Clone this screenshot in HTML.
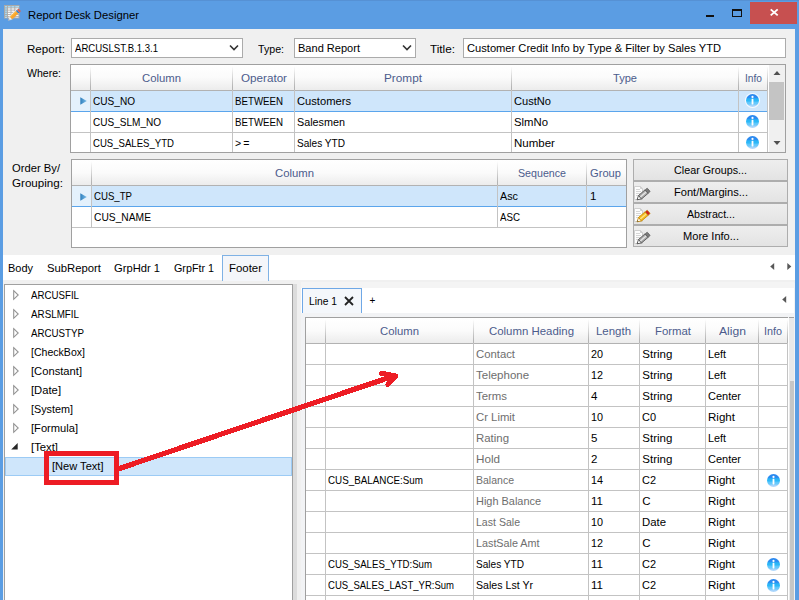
<!DOCTYPE html>
<html><head><meta charset="utf-8"><title>Report Desk Designer</title>
<style>
html,body{margin:0;padding:0;}
body{width:799px;height:600px;overflow:hidden;position:relative;background:#f0f0f0;font-family:"Liberation Sans",sans-serif;font-size:12px;}
.b{position:absolute;box-sizing:border-box;}
.t{position:absolute;white-space:pre;transform-origin:0 50%;line-height:16px;height:16px;font-size:11.5px;color:#000;}
svg{position:absolute;overflow:visible;}
</style></head><body>
<div class="b " style="left:0px;top:0px;width:799px;height:600px;background:#5b9de3;"></div>
<div class="b " style="left:3px;top:29px;width:792px;height:571px;background:#f0f0f0;"></div>
<div class="b " style="left:750px;top:2px;width:47px;height:22px;background:#c75050;"></div>
<svg style="left:750px;top:2px" width="47" height="22"><path d="M20.7 7.4 L27.7 13.4 M27.7 7.4 L20.7 13.4" stroke="#fff" stroke-width="1.9" fill="none"/></svg>
<div class="b " style="left:706px;top:15px;width:8px;height:2px;background:#111;"></div>
<div class="b " style="left:732px;top:9px;width:10px;height:8px;border:1px solid #111;border-top:2px solid #111;"></div>
<svg style="left:0px;top:0px" width="24" height="24" viewBox="0 0 24 24">
<rect x="4.5" y="5.5" width="14.5" height="12.5" fill="#fff" stroke="#a9a9a9"/>
<rect x="5" y="6" width="13.5" height="1.6" fill="#a6d8f2"/>
<rect x="5" y="6" width="2.2" height="11.5" fill="#a6d8f2"/>
<path d="M4.5 7.9H19M4.5 10.1H19M4.5 12.3H19M4.5 14.5H19M4.5 16.4H19M7.5 5.5V18M11 5.5V18M14.8 5.5V18" stroke="#a9a9a9" stroke-width="0.9" fill="none"/>
<g transform="translate(8.3,20.4) rotate(-43)">
<path d="M0 0 L3.6 -1.9 L3.6 1.9 Z" fill="#f4f4f4" stroke="#d0d0d0" stroke-width="0.4"/>
<path d="M0 0 L1.3 -0.7 L1.3 0.7 Z" fill="#8a8a8a"/>
<rect x="3.6" y="-1.9" width="8.4" height="3.8" fill="#f9a62b"/>
<rect x="3.6" y="-1.9" width="8.4" height="1.1" fill="#fbbd55"/>
<rect x="12" y="-1.9" width="1.6" height="3.8" fill="#2f7fc4"/>
<rect x="13.6" y="-1.9" width="2" height="3.8" rx="0.8" fill="#e2604e"/>
<path d="M3.6 -2.2 L15 -2.2" stroke="#fff" stroke-width="0.7" opacity="0.8"/>
</g>
</svg>
<span class="t " style="left:28.00px;top:7.20px;transform:scaleX(0.9812);">Report Desk Designer</span>
<span class="t " style="left:27.00px;top:40.90px;transform:scaleX(1.0076);">Report:</span>
<div class="b " style="left:71px;top:38px;width:172px;height:20px;background:#fff;border:1px solid #ababab;"></div>
<span class="t " style="left:75.00px;top:40.20px;transform:scaleX(0.8324);">ARCUSLST.B.1.3.1</span>
<svg style="left:229px;top:44px" width="10" height="8"><path d="M1 1.5 L5 5.5 L9 1.5" stroke="#333" stroke-width="1.6" fill="none"/></svg>
<span class="t " style="left:258.00px;top:40.90px;transform:scaleX(0.9244);">Type:</span>
<div class="b " style="left:294px;top:38px;width:122px;height:20px;background:#fff;border:1px solid #ababab;"></div>
<span class="t " style="left:298.00px;top:40.20px;transform:scaleX(0.9602);">Band Report</span>
<svg style="left:402px;top:44px" width="10" height="8"><path d="M1 1.5 L5 5.5 L9 1.5" stroke="#333" stroke-width="1.6" fill="none"/></svg>
<span class="t " style="left:430.00px;top:40.90px;transform:scaleX(1.0207);">Title:</span>
<div class="b " style="left:463px;top:38px;width:323px;height:20px;background:#fff;border:1px solid #ababab;"></div>
<span class="t " style="left:467.00px;top:40.20px;transform:scaleX(0.9685);">Customer Credit Info by Type &amp; Filter by Sales YTD</span>
<span class="t " style="left:27.00px;top:65.20px;transform:scaleX(0.9173);">Where:</span>
<div class="b " style="left:70px;top:64px;width:716px;height:89px;background:#fff;border:1px solid #a0a0a0;"></div>
<div class="b " style="left:71px;top:65px;width:697px;height:26px;background:linear-gradient(#ffffff 0%,#fbfbfb 50%,#ececec 100%);border-bottom:1px solid #b2b2b2;"></div>
<div class="b " style="left:71px;top:90px;width:697px;height:22px;background:#cfe6fb;border-top:1px solid #b2b2b2;border-bottom:1px solid #5ba5ec;"></div>
<div class="b " style="left:71px;top:91px;width:19px;height:20px;background:#e4f1fc;"></div>
<div class="b " style="left:71px;top:132px;width:697px;height:1px;background:#c3c3c3;"></div>
<div class="b " style="left:90px;top:65px;width:1px;height:26px;background:linear-gradient(rgba(190,190,190,0) 5%,#b4b4b4 85%);"></div>
<div class="b " style="left:90px;top:90px;width:1px;height:62px;background:#c3c3c3;"></div>
<div class="b " style="left:232px;top:65px;width:1px;height:26px;background:linear-gradient(rgba(190,190,190,0) 5%,#b4b4b4 85%);"></div>
<div class="b " style="left:232px;top:90px;width:1px;height:62px;background:#c3c3c3;"></div>
<div class="b " style="left:294px;top:65px;width:1px;height:26px;background:linear-gradient(rgba(190,190,190,0) 5%,#b4b4b4 85%);"></div>
<div class="b " style="left:294px;top:90px;width:1px;height:62px;background:#c3c3c3;"></div>
<div class="b " style="left:511px;top:65px;width:1px;height:26px;background:linear-gradient(rgba(190,190,190,0) 5%,#b4b4b4 85%);"></div>
<div class="b " style="left:511px;top:90px;width:1px;height:62px;background:#c3c3c3;"></div>
<div class="b " style="left:738px;top:65px;width:1px;height:26px;background:linear-gradient(rgba(190,190,190,0) 5%,#b4b4b4 85%);"></div>
<div class="b " style="left:738px;top:90px;width:1px;height:62px;background:#c3c3c3;"></div>
<div class="b " style="left:767px;top:65px;width:1px;height:26px;background:linear-gradient(rgba(190,190,190,0) 5%,#b4b4b4 85%);"></div>
<div class="b " style="left:767px;top:90px;width:1px;height:62px;background:#c3c3c3;"></div>
<span class="t " style="left:142.00px;top:69.90px;color:#4c5c8c;transform:scaleX(0.9842);">Column</span>
<span class="t " style="left:240.50px;top:69.90px;color:#4c5c8c;transform:scaleX(1.0136);">Operator</span>
<span class="t " style="left:384.00px;top:69.90px;color:#4c5c8c;transform:scaleX(1.0251);">Prompt</span>
<span class="t " style="left:613.00px;top:69.90px;color:#4c5c8c;transform:scaleX(0.9627);">Type</span>
<span class="t " style="left:744.50px;top:69.90px;color:#4c5c8c;transform:scaleX(0.8863);">Info</span>
<span class="t " style="left:93.00px;top:93.20px;transform:scaleX(0.8764);">CUS_NO</span>
<span class="t " style="left:235.00px;top:93.20px;transform:scaleX(0.8441);">BETWEEN</span>
<span class="t " style="left:297.00px;top:93.20px;transform:scaleX(0.9713);">Customers</span>
<span class="t " style="left:514.00px;top:93.20px;transform:scaleX(0.9649);">CustNo</span>
<svg style="left:744.3px;top:92.3px" width="17" height="17" viewBox="0 0 17 17">
<defs><linearGradient id="ig" x1="0" y1="0" x2="0" y2="1"><stop offset="0" stop-color="#2a86ee"/><stop offset="0.30" stop-color="#2b8ef2"/><stop offset="0.36" stop-color="#27b2f6"/><stop offset="0.55" stop-color="#2ebbf8"/><stop offset="0.62" stop-color="#5cc6fb"/><stop offset="0.78" stop-color="#6ccafc"/><stop offset="0.86" stop-color="#a2d2fb"/><stop offset="1" stop-color="#b4dafc"/></linearGradient></defs>
<circle cx="8.5" cy="8.5" r="7.6" fill="#fff" opacity="0.8"/>
<circle cx="8.5" cy="8.5" r="6.5" fill="url(#ig)"/>
<circle cx="8.5" cy="4.9" r="1.1" fill="#fff"/><rect x="7.6" y="6.7" width="1.8" height="5.7" rx="0.3" fill="#fff"/></svg>
<span class="t " style="left:93.00px;top:114.20px;transform:scaleX(0.8722);">CUS_SLM_NO</span>
<span class="t " style="left:235.00px;top:114.20px;transform:scaleX(0.8441);">BETWEEN</span>
<span class="t " style="left:297.00px;top:114.20px;transform:scaleX(0.9386);">Salesmen</span>
<span class="t " style="left:514.00px;top:114.20px;transform:scaleX(0.9853);">SlmNo</span>
<svg style="left:744.3px;top:113.3px" width="17" height="17" viewBox="0 0 17 17">
<defs><linearGradient id="ig" x1="0" y1="0" x2="0" y2="1"><stop offset="0" stop-color="#2a86ee"/><stop offset="0.30" stop-color="#2b8ef2"/><stop offset="0.36" stop-color="#27b2f6"/><stop offset="0.55" stop-color="#2ebbf8"/><stop offset="0.62" stop-color="#5cc6fb"/><stop offset="0.78" stop-color="#6ccafc"/><stop offset="0.86" stop-color="#a2d2fb"/><stop offset="1" stop-color="#b4dafc"/></linearGradient></defs>
<circle cx="8.5" cy="8.5" r="7.6" fill="#fff" opacity="0.8"/>
<circle cx="8.5" cy="8.5" r="6.5" fill="url(#ig)"/>
<circle cx="8.5" cy="4.9" r="1.1" fill="#fff"/><rect x="7.6" y="6.7" width="1.8" height="5.7" rx="0.3" fill="#fff"/></svg>
<span class="t " style="left:93.00px;top:135.20px;transform:scaleX(0.8338);">CUS_SALES_YTD</span>
<span class="t " style="left:235.00px;top:135.20px;transform:scaleX(0.9215);">&gt; =</span>
<span class="t " style="left:297.00px;top:135.20px;transform:scaleX(0.8767);">Sales YTD</span>
<span class="t " style="left:514.00px;top:135.20px;">Number</span>
<svg style="left:744.3px;top:134.3px" width="17" height="17" viewBox="0 0 17 17">
<defs><linearGradient id="ig" x1="0" y1="0" x2="0" y2="1"><stop offset="0" stop-color="#2a86ee"/><stop offset="0.30" stop-color="#2b8ef2"/><stop offset="0.36" stop-color="#27b2f6"/><stop offset="0.55" stop-color="#2ebbf8"/><stop offset="0.62" stop-color="#5cc6fb"/><stop offset="0.78" stop-color="#6ccafc"/><stop offset="0.86" stop-color="#a2d2fb"/><stop offset="1" stop-color="#b4dafc"/></linearGradient></defs>
<circle cx="8.5" cy="8.5" r="7.6" fill="#fff" opacity="0.8"/>
<circle cx="8.5" cy="8.5" r="6.5" fill="url(#ig)"/>
<circle cx="8.5" cy="4.9" r="1.1" fill="#fff"/><rect x="7.6" y="6.7" width="1.8" height="5.7" rx="0.3" fill="#fff"/></svg>
<svg style="left:79.5px;top:97px" width="8" height="8"><defs><linearGradient id="ag"><stop offset="0" stop-color="#2f7fbd"/><stop offset="1" stop-color="#7cbde8"/></linearGradient></defs><path d="M0.3 0.2 L6.8 4 L0.3 7.8 Z" fill="url(#ag)"/></svg>
<div class="b " style="left:769px;top:65px;width:16px;height:87px;background:#f0f0f0;"></div>
<div class="b " style="left:769px;top:82px;width:15px;height:38px;background:#c4c4c4;"></div>
<svg style="left:769px;top:65px" width="16" height="87"><path d="M4.5 10 L8 6 L11.5 10 Z" fill="#505050"/><path d="M4.5 76 L8 80 L11.5 76 Z" fill="#505050"/></svg>
<span class="t " style="left:12.00px;top:160.20px;transform:scaleX(0.9754);">Order By/</span>
<span class="t " style="left:12.00px;top:175.20px;transform:scaleX(1.0098);">Grouping:</span>
<div class="b " style="left:71px;top:159px;width:556px;height:89px;background:#fff;border:1px solid #a0a0a0;"></div>
<div class="b " style="left:72px;top:160px;width:554px;height:26px;background:linear-gradient(#ffffff 0%,#fbfbfb 50%,#ececec 100%);border-bottom:1px solid #b2b2b2;"></div>
<div class="b " style="left:72px;top:185px;width:554px;height:22px;background:#cfe6fb;border-top:1px solid #b2b2b2;border-bottom:1px solid #5ba5ec;"></div>
<div class="b " style="left:72px;top:186px;width:19px;height:20px;background:#e4f1fc;"></div>
<div class="b " style="left:72px;top:227px;width:554px;height:1px;background:#c3c3c3;"></div>
<div class="b " style="left:91px;top:160px;width:1px;height:26px;background:linear-gradient(rgba(190,190,190,0) 5%,#b4b4b4 85%);"></div>
<div class="b " style="left:91px;top:185px;width:1px;height:43px;background:#c3c3c3;"></div>
<div class="b " style="left:497px;top:160px;width:1px;height:26px;background:linear-gradient(rgba(190,190,190,0) 5%,#b4b4b4 85%);"></div>
<div class="b " style="left:497px;top:185px;width:1px;height:43px;background:#c3c3c3;"></div>
<div class="b " style="left:586px;top:160px;width:1px;height:26px;background:linear-gradient(rgba(190,190,190,0) 5%,#b4b4b4 85%);"></div>
<div class="b " style="left:586px;top:185px;width:1px;height:43px;background:#c3c3c3;"></div>
<span class="t " style="left:275.00px;top:165.20px;color:#4c5c8c;transform:scaleX(0.9842);">Column</span>
<span class="t " style="left:518.00px;top:165.20px;color:#4c5c8c;transform:scaleX(0.9268);">Sequence</span>
<span class="t " style="left:590.00px;top:165.20px;color:#4c5c8c;transform:scaleX(0.9699);">Group</span>
<span class="t " style="left:94.00px;top:188.20px;transform:scaleX(0.8375);">CUS_TP</span>
<span class="t " style="left:500.00px;top:188.20px;transform:scaleX(0.9389);">Asc</span>
<span class="t " style="left:590.00px;top:188.20px;">1</span>
<span class="t " style="left:94.30px;top:209.20px;transform:scaleX(0.8920);">CUS_NAME</span>
<span class="t " style="left:500.00px;top:209.20px;transform:scaleX(0.8458);">ASC</span>
<svg style="left:79.8px;top:192.5px" width="8" height="8"><path d="M0.3 0.2 L6.8 4 L0.3 7.8 Z" fill="url(#ag)"/></svg>
<div class="b " style="left:633px;top:159px;width:155px;height:22px;background:linear-gradient(#eeeeee,#e3e3e3);border:1px solid #adadad;"></div>
<span class="t " style="left:674.00px;top:161.80px;transform:scaleX(0.9362);">Clear Groups...</span>
<div class="b " style="left:633px;top:181px;width:155px;height:22px;background:linear-gradient(#eeeeee,#e3e3e3);border:1px solid #adadad;"></div>
<span class="t " style="left:673.50px;top:183.80px;transform:scaleX(0.9649);">Font/Margins...</span>
<svg style="left:634px;top:185px" width="17" height="17" viewBox="0 0 17 17">
<path d="M0.5 1.5 H6.5 L8.5 3.5 V14.5 H0.5 Z" fill="#fdfdfd" stroke="#cfcfcf"/>
<path d="M6.5 1.5 V3.5 H8.5" fill="none" stroke="#cfcfcf"/>
<path d="M2 4.5H6M2 6.5H7M2 8.5H6M2 10.5H4" stroke="#d6d6d6"/>
<g transform="translate(3.0,14.8) rotate(-40.5)">
<path d="M0 0 L4 -2.3 L4 2.3 Z" fill="#fff" stroke="#5e5e5e" stroke-width="0.9" stroke-linejoin="round"/>
<path d="M0 0 L1.4 -0.8 L1.4 0.8 Z" fill="#555"/>
<rect x="4" y="-2.3" width="8.6" height="4.6" fill="#a8a8a8" stroke="#5e5e5e" stroke-width="0.9"/>
<rect x="4.4" y="-0.7" width="8" height="1.3" fill="#e6e6e6"/>
<rect x="12.6" y="-2.3" width="2.8" height="4.6" rx="0.6" fill="#7c7c7c" stroke="#5e5e5e" stroke-width="0.7"/>
</g>
</svg>
<div class="b " style="left:633px;top:203px;width:155px;height:22px;background:linear-gradient(#eeeeee,#e3e3e3);border:1px solid #adadad;"></div>
<span class="t " style="left:686.50px;top:205.80px;transform:scaleX(0.9272);">Abstract...</span>
<svg style="left:634px;top:207px" width="17" height="17" viewBox="0 0 17 17">
<path d="M0.5 1.5 H6.5 L8.5 3.5 V14.5 H0.5 Z" fill="#fdfdfd" stroke="#cfcfcf"/>
<path d="M6.5 1.5 V3.5 H8.5" fill="none" stroke="#cfcfcf"/>
<path d="M2 4.5H6M2 6.5H7M2 8.5H6M2 10.5H4" stroke="#d6d6d6"/>
<g transform="translate(3.0,14.8) rotate(-40.5)">
<path d="M0 0 L4 -2.3 L4 2.3 Z" fill="#fff" stroke="#c98e12" stroke-width="0.9" stroke-linejoin="round"/>
<path d="M0 0 L1.4 -0.8 L1.4 0.8 Z" fill="#555"/>
<rect x="4" y="-2.3" width="8.6" height="4.6" fill="#f6bd1f" stroke="#c98e12" stroke-width="0.9"/>
<rect x="4.4" y="-0.7" width="8" height="1.3" fill="#fde58a"/>
<rect x="12.6" y="-2.3" width="2.8" height="4.6" rx="0.6" fill="#cf2020" stroke="#c98e12" stroke-width="0.7"/>
</g>
</svg>
<div class="b " style="left:633px;top:225px;width:155px;height:22px;background:linear-gradient(#eeeeee,#e3e3e3);border:1px solid #adadad;"></div>
<span class="t " style="left:682.50px;top:227.80px;transform:scaleX(0.9628);">More Info...</span>
<svg style="left:634px;top:229px" width="17" height="17" viewBox="0 0 17 17">
<path d="M0.5 1.5 H6.5 L8.5 3.5 V14.5 H0.5 Z" fill="#fdfdfd" stroke="#cfcfcf"/>
<path d="M6.5 1.5 V3.5 H8.5" fill="none" stroke="#cfcfcf"/>
<path d="M2 4.5H6M2 6.5H7M2 8.5H6M2 10.5H4" stroke="#d6d6d6"/>
<g transform="translate(3.0,14.8) rotate(-40.5)">
<path d="M0 0 L4 -2.3 L4 2.3 Z" fill="#fff" stroke="#5e5e5e" stroke-width="0.9" stroke-linejoin="round"/>
<path d="M0 0 L1.4 -0.8 L1.4 0.8 Z" fill="#555"/>
<rect x="4" y="-2.3" width="8.6" height="4.6" fill="#a8a8a8" stroke="#5e5e5e" stroke-width="0.9"/>
<rect x="4.4" y="-0.7" width="8" height="1.3" fill="#e6e6e6"/>
<rect x="12.6" y="-2.3" width="2.8" height="4.6" rx="0.6" fill="#7c7c7c" stroke="#5e5e5e" stroke-width="0.7"/>
</g>
</svg>
<div class="b " style="left:3px;top:255px;width:792px;height:25px;background:#fff;"></div>
<div class="b " style="left:222px;top:255px;width:47px;height:26px;background:#f4f6fa;border:1px solid #7fb2e5;border-bottom:none;"></div>
<span class="t " style="left:8.00px;top:260.20px;transform:scaleX(0.9538);">Body</span>
<span class="t " style="left:47.00px;top:260.20px;transform:scaleX(0.9822);">SubReport</span>
<span class="t " style="left:114.00px;top:260.20px;transform:scaleX(0.9727);">GrpHdr 1</span>
<span class="t " style="left:174.00px;top:260.20px;transform:scaleX(0.9343);">GrpFtr 1</span>
<span class="t " style="left:229.00px;top:260.20px;transform:scaleX(0.9929);">Footer</span>
<svg style="left:768px;top:261px" width="26" height="10"><path d="M6.2 1.9 L2.2 5.5 L6.2 9.1 Z" fill="#585858"/><path d="M19.3 1.9 L23.3 5.5 L19.3 9.1 Z" fill="#585858"/></svg>
<div class="b " style="left:4px;top:284px;width:289px;height:317px;background:#fff;border:1px solid #a0a0a0;"></div>
<div class="b " style="left:293px;top:284px;width:4px;height:316px;background:#dcdcdc;"></div>
<div class="b " style="left:5px;top:457px;width:287px;height:19px;background:#cfe6fb;border:1px solid #9ccbf5;"></div>
<span class="t " style="left:31.30px;top:287.00px;transform:scaleX(0.8440);">ARCUSFIL</span>
<svg style="left:13px;top:289.5px" width="7" height="10"><path d="M0.7 0.7 L5.2 5 L0.7 9.3 Z" fill="#fff" stroke="#949494" stroke-width="1.1"/></svg>
<span class="t " style="left:31.30px;top:306.00px;transform:scaleX(0.8535);">ARSLMFIL</span>
<svg style="left:13px;top:308.5px" width="7" height="10"><path d="M0.7 0.7 L5.2 5 L0.7 9.3 Z" fill="#fff" stroke="#949494" stroke-width="1.1"/></svg>
<span class="t " style="left:31.30px;top:325.00px;transform:scaleX(0.8463);">ARCUSTYP</span>
<svg style="left:13px;top:327.5px" width="7" height="10"><path d="M0.7 0.7 L5.2 5 L0.7 9.3 Z" fill="#fff" stroke="#949494" stroke-width="1.1"/></svg>
<span class="t " style="left:31.30px;top:344.00px;transform:scaleX(0.9183);">[CheckBox]</span>
<svg style="left:13px;top:346.5px" width="7" height="10"><path d="M0.7 0.7 L5.2 5 L0.7 9.3 Z" fill="#fff" stroke="#949494" stroke-width="1.1"/></svg>
<span class="t " style="left:31.30px;top:363.00px;transform:scaleX(0.9730);">[Constant]</span>
<svg style="left:13px;top:365.5px" width="7" height="10"><path d="M0.7 0.7 L5.2 5 L0.7 9.3 Z" fill="#fff" stroke="#949494" stroke-width="1.1"/></svg>
<span class="t " style="left:31.30px;top:382.00px;transform:scaleX(0.9778);">[Date]</span>
<svg style="left:13px;top:384.5px" width="7" height="10"><path d="M0.7 0.7 L5.2 5 L0.7 9.3 Z" fill="#fff" stroke="#949494" stroke-width="1.1"/></svg>
<span class="t " style="left:31.30px;top:401.00px;transform:scaleX(0.9389);">[System]</span>
<svg style="left:13px;top:403.5px" width="7" height="10"><path d="M0.7 0.7 L5.2 5 L0.7 9.3 Z" fill="#fff" stroke="#949494" stroke-width="1.1"/></svg>
<span class="t " style="left:31.30px;top:420.00px;transform:scaleX(0.9677);">[Formula]</span>
<svg style="left:13px;top:422.5px" width="7" height="10"><path d="M0.7 0.7 L5.2 5 L0.7 9.3 Z" fill="#fff" stroke="#949494" stroke-width="1.1"/></svg>
<span class="t " style="left:31.30px;top:439.00px;transform:scaleX(0.9825);">[Text]</span>
<svg style="left:11px;top:442.8px" width="8" height="8"><path d="M6.7 0 L6.7 6.5 L0.2 6.5 Z" fill="#262626"/></svg>
<span class="t " style="left:51.50px;top:458.10px;transform:scaleX(0.9631);">[New Text]</span>
<div class="b " style="left:301px;top:283px;width:494px;height:317px;background:#f2f3f5;"></div>
<div class="b " style="left:301px;top:282px;width:493px;height:6px;background:#f4f4f4;"></div>
<div class="b " style="left:301px;top:288px;width:493px;height:25px;background:#fff;"></div>
<div class="b " style="left:302px;top:288px;width:60px;height:25px;background:#f4f7fb;border:1px solid #6fa8e6;border-bottom:none;"></div>
<span class="t " style="left:309.00px;top:293.20px;transform:scaleX(0.8937);">Line 1</span>
<svg style="left:344px;top:296px" width="10" height="10"><path d="M1 1 L9 9 M9 1 L1 9" stroke="#222" stroke-width="1.8" fill="none"/></svg>
<span class="t " style="left:369.50px;top:293.20px;font-size:10px;">+</span>
<svg style="left:780px;top:294px" width="8" height="10"><path d="M6.2 1.9 L2.2 5.5 L6.2 9.1 Z" fill="#585858"/></svg>
<div class="b " style="left:305px;top:317px;width:492px;height:300px;background:#fff;border:1px solid #a0a0a0;"></div>
<div class="b " style="left:306px;top:318px;width:482px;height:26px;background:linear-gradient(#ffffff 0%,#fbfbfb 50%,#ececec 100%);border-bottom:1px solid #b2b2b2;"></div>
<div class="b " style="left:306px;top:364px;width:482px;height:1px;background:#c3c3c3;"></div>
<div class="b " style="left:306px;top:385px;width:482px;height:1px;background:#c3c3c3;"></div>
<div class="b " style="left:306px;top:406px;width:482px;height:1px;background:#c3c3c3;"></div>
<div class="b " style="left:306px;top:427px;width:482px;height:1px;background:#c3c3c3;"></div>
<div class="b " style="left:306px;top:448px;width:482px;height:1px;background:#c3c3c3;"></div>
<div class="b " style="left:306px;top:469px;width:482px;height:1px;background:#c3c3c3;"></div>
<div class="b " style="left:306px;top:490px;width:482px;height:1px;background:#c3c3c3;"></div>
<div class="b " style="left:306px;top:511px;width:482px;height:1px;background:#c3c3c3;"></div>
<div class="b " style="left:306px;top:532px;width:482px;height:1px;background:#c3c3c3;"></div>
<div class="b " style="left:306px;top:553px;width:482px;height:1px;background:#c3c3c3;"></div>
<div class="b " style="left:306px;top:574px;width:482px;height:1px;background:#c3c3c3;"></div>
<div class="b " style="left:306px;top:595px;width:482px;height:1px;background:#c3c3c3;"></div>
<div class="b " style="left:325px;top:318px;width:1px;height:26px;background:linear-gradient(rgba(190,190,190,0) 5%,#b4b4b4 85%);"></div>
<div class="b " style="left:325px;top:343px;width:1px;height:273px;background:#c3c3c3;"></div>
<div class="b " style="left:473px;top:318px;width:1px;height:26px;background:linear-gradient(rgba(190,190,190,0) 5%,#b4b4b4 85%);"></div>
<div class="b " style="left:473px;top:343px;width:1px;height:273px;background:#c3c3c3;"></div>
<div class="b " style="left:588px;top:318px;width:1px;height:26px;background:linear-gradient(rgba(190,190,190,0) 5%,#b4b4b4 85%);"></div>
<div class="b " style="left:588px;top:343px;width:1px;height:273px;background:#c3c3c3;"></div>
<div class="b " style="left:639px;top:318px;width:1px;height:26px;background:linear-gradient(rgba(190,190,190,0) 5%,#b4b4b4 85%);"></div>
<div class="b " style="left:639px;top:343px;width:1px;height:273px;background:#c3c3c3;"></div>
<div class="b " style="left:705px;top:318px;width:1px;height:26px;background:linear-gradient(rgba(190,190,190,0) 5%,#b4b4b4 85%);"></div>
<div class="b " style="left:705px;top:343px;width:1px;height:273px;background:#c3c3c3;"></div>
<div class="b " style="left:758px;top:318px;width:1px;height:26px;background:linear-gradient(rgba(190,190,190,0) 5%,#b4b4b4 85%);"></div>
<div class="b " style="left:758px;top:343px;width:1px;height:273px;background:#c3c3c3;"></div>
<div class="b " style="left:787px;top:318px;width:1px;height:26px;background:linear-gradient(rgba(190,190,190,0) 5%,#b4b4b4 85%);"></div>
<div class="b " style="left:787px;top:343px;width:1px;height:273px;background:#c3c3c3;"></div>
<span class="t " style="left:380.00px;top:323.20px;color:#4c5c8c;transform:scaleX(0.9842);">Column</span>
<span class="t " style="left:488.50px;top:323.20px;color:#4c5c8c;transform:scaleX(0.9923);">Column Heading</span>
<span class="t " style="left:596.00px;top:323.20px;color:#4c5c8c;transform:scaleX(0.9951);">Length</span>
<span class="t " style="left:654.50px;top:323.20px;color:#4c5c8c;transform:scaleX(0.9884);">Format</span>
<span class="t " style="left:718.50px;top:323.20px;color:#4c5c8c;transform:scaleX(1.0559);">Align</span>
<span class="t " style="left:764.00px;top:323.20px;color:#4c5c8c;transform:scaleX(0.9384);">Info</span>
<span class="t " style="left:476.00px;top:346.20px;color:#6e6e6e;transform:scaleX(0.9841);">Contact</span>
<span class="t " style="left:591.00px;top:346.20px;transform:scaleX(0.9382);">20</span>
<span class="t " style="left:642.30px;top:346.20px;">String</span>
<span class="t " style="left:708.30px;top:346.20px;transform:scaleX(0.9384);">Left</span>
<span class="t " style="left:476.00px;top:367.20px;color:#6e6e6e;">Telephone</span>
<span class="t " style="left:591.00px;top:367.20px;transform:scaleX(0.9382);">12</span>
<span class="t " style="left:642.30px;top:367.20px;">String</span>
<span class="t " style="left:708.30px;top:367.20px;transform:scaleX(0.9384);">Left</span>
<span class="t " style="left:476.00px;top:388.20px;color:#6e6e6e;transform:scaleX(0.9902);">Terms</span>
<span class="t " style="left:591.00px;top:388.20px;">4</span>
<span class="t " style="left:642.30px;top:388.20px;">String</span>
<span class="t " style="left:708.30px;top:388.20px;transform:scaleX(0.9561);">Center</span>
<span class="t " style="left:476.00px;top:409.20px;color:#6e6e6e;transform:scaleX(0.9846);">Cr Limit</span>
<span class="t " style="left:591.00px;top:409.20px;transform:scaleX(0.9382);">10</span>
<span class="t " style="left:642.30px;top:409.20px;transform:scaleX(0.9524);">C0</span>
<span class="t " style="left:708.30px;top:409.20px;transform:scaleX(1.0058);">Right</span>
<span class="t " style="left:476.00px;top:430.20px;color:#6e6e6e;transform:scaleX(0.9928);">Rating</span>
<span class="t " style="left:591.00px;top:430.20px;">5</span>
<span class="t " style="left:642.30px;top:430.20px;">String</span>
<span class="t " style="left:708.30px;top:430.20px;transform:scaleX(0.9384);">Left</span>
<span class="t " style="left:476.00px;top:451.20px;color:#6e6e6e;transform:scaleX(1.0148);">Hold</span>
<span class="t " style="left:591.00px;top:451.20px;">2</span>
<span class="t " style="left:642.30px;top:451.20px;">String</span>
<span class="t " style="left:708.30px;top:451.20px;transform:scaleX(0.9561);">Center</span>
<span class="t " style="left:328.00px;top:472.20px;transform:scaleX(0.8543);">CUS_BALANCE:Sum</span>
<span class="t " style="left:476.00px;top:472.20px;color:#6e6e6e;transform:scaleX(0.9144);">Balance</span>
<span class="t " style="left:591.00px;top:472.20px;transform:scaleX(0.9382);">14</span>
<span class="t " style="left:642.30px;top:472.20px;transform:scaleX(0.9524);">C2</span>
<span class="t " style="left:708.30px;top:472.20px;transform:scaleX(1.0058);">Right</span>
<svg style="left:764.5px;top:471.5px" width="17" height="17" viewBox="0 0 17 17">
<defs><linearGradient id="ig" x1="0" y1="0" x2="0" y2="1"><stop offset="0" stop-color="#2a86ee"/><stop offset="0.30" stop-color="#2b8ef2"/><stop offset="0.36" stop-color="#27b2f6"/><stop offset="0.55" stop-color="#2ebbf8"/><stop offset="0.62" stop-color="#5cc6fb"/><stop offset="0.78" stop-color="#6ccafc"/><stop offset="0.86" stop-color="#a2d2fb"/><stop offset="1" stop-color="#b4dafc"/></linearGradient></defs>
<circle cx="8.5" cy="8.5" r="7.6" fill="#fff" opacity="0.8"/>
<circle cx="8.5" cy="8.5" r="6.5" fill="url(#ig)"/>
<circle cx="8.5" cy="4.9" r="1.1" fill="#fff"/><rect x="7.6" y="6.7" width="1.8" height="5.7" rx="0.3" fill="#fff"/></svg>
<span class="t " style="left:476.00px;top:493.20px;color:#6e6e6e;transform:scaleX(0.9503);">High Balance</span>
<span class="t " style="left:591.00px;top:493.20px;transform:scaleX(1.0053);">11</span>
<span class="t " style="left:642.30px;top:493.20px;">C</span>
<span class="t " style="left:708.30px;top:493.20px;transform:scaleX(1.0058);">Right</span>
<span class="t " style="left:476.00px;top:514.20px;color:#6e6e6e;transform:scaleX(0.9177);">Last Sale</span>
<span class="t " style="left:591.00px;top:514.20px;transform:scaleX(0.9382);">10</span>
<span class="t " style="left:642.30px;top:514.20px;transform:scaleX(0.9880);">Date</span>
<span class="t " style="left:708.30px;top:514.20px;transform:scaleX(1.0058);">Right</span>
<span class="t " style="left:476.00px;top:535.20px;color:#6e6e6e;transform:scaleX(0.9371);">LastSale Amt</span>
<span class="t " style="left:591.00px;top:535.20px;transform:scaleX(0.9382);">12</span>
<span class="t " style="left:642.30px;top:535.20px;">C</span>
<span class="t " style="left:708.30px;top:535.20px;transform:scaleX(1.0058);">Right</span>
<span class="t " style="left:328.00px;top:556.20px;transform:scaleX(0.8388);">CUS_SALES_YTD:Sum</span>
<span class="t " style="left:476.00px;top:556.20px;transform:scaleX(0.8767);">Sales YTD</span>
<span class="t " style="left:591.00px;top:556.20px;transform:scaleX(1.0053);">11</span>
<span class="t " style="left:642.30px;top:556.20px;transform:scaleX(0.9524);">C2</span>
<span class="t " style="left:708.30px;top:556.20px;transform:scaleX(1.0058);">Right</span>
<svg style="left:764.5px;top:555.5px" width="17" height="17" viewBox="0 0 17 17">
<defs><linearGradient id="ig" x1="0" y1="0" x2="0" y2="1"><stop offset="0" stop-color="#2a86ee"/><stop offset="0.30" stop-color="#2b8ef2"/><stop offset="0.36" stop-color="#27b2f6"/><stop offset="0.55" stop-color="#2ebbf8"/><stop offset="0.62" stop-color="#5cc6fb"/><stop offset="0.78" stop-color="#6ccafc"/><stop offset="0.86" stop-color="#a2d2fb"/><stop offset="1" stop-color="#b4dafc"/></linearGradient></defs>
<circle cx="8.5" cy="8.5" r="7.6" fill="#fff" opacity="0.8"/>
<circle cx="8.5" cy="8.5" r="6.5" fill="url(#ig)"/>
<circle cx="8.5" cy="4.9" r="1.1" fill="#fff"/><rect x="7.6" y="6.7" width="1.8" height="5.7" rx="0.3" fill="#fff"/></svg>
<span class="t " style="left:328.00px;top:577.20px;transform:scaleX(0.8283);">CUS_SALES_LAST_YR:Sum</span>
<span class="t " style="left:476.00px;top:577.20px;transform:scaleX(0.9225);">Sales Lst Yr</span>
<span class="t " style="left:591.00px;top:577.20px;transform:scaleX(1.0053);">11</span>
<span class="t " style="left:642.30px;top:577.20px;transform:scaleX(0.9524);">C2</span>
<span class="t " style="left:708.30px;top:577.20px;transform:scaleX(1.0058);">Right</span>
<svg style="left:764.5px;top:576.5px" width="17" height="17" viewBox="0 0 17 17">
<defs><linearGradient id="ig" x1="0" y1="0" x2="0" y2="1"><stop offset="0" stop-color="#2a86ee"/><stop offset="0.30" stop-color="#2b8ef2"/><stop offset="0.36" stop-color="#27b2f6"/><stop offset="0.55" stop-color="#2ebbf8"/><stop offset="0.62" stop-color="#5cc6fb"/><stop offset="0.78" stop-color="#6ccafc"/><stop offset="0.86" stop-color="#a2d2fb"/><stop offset="1" stop-color="#b4dafc"/></linearGradient></defs>
<circle cx="8.5" cy="8.5" r="7.6" fill="#fff" opacity="0.8"/>
<circle cx="8.5" cy="8.5" r="6.5" fill="url(#ig)"/>
<circle cx="8.5" cy="4.9" r="1.1" fill="#fff"/><rect x="7.6" y="6.7" width="1.8" height="5.7" rx="0.3" fill="#fff"/></svg>
<div class="b " style="left:788px;top:317px;width:7px;height:283px;background:#f2f3f5;"></div>
<div class="b " style="left:788px;top:318px;width:1px;height:282px;background:#fff;"></div>
<div class="b " style="left:789px;top:317px;width:5px;height:283px;background:#e9e9e9;border-top:1px solid #a0a0a0;"></div>
<div class="b " style="left:789.5px;top:381px;width:4.5px;height:219px;background:#c6c6c6;"></div>
<div class="b " style="left:795px;top:29px;width:4px;height:571px;background:#5b9de3;"></div>
<div class="b " style="left:0px;top:0px;width:799px;height:1px;background:#5691d4;"></div>
<svg style="left:0;top:0" width="799" height="600" shape-rendering="crispEdges">
<rect x="46.5" y="453.5" width="70" height="28.5" fill="none" stroke="#ed1c24" stroke-width="5"/>
<path d="M118 469.0 L391 376.9" stroke="#ed1c24" stroke-width="5.2" fill="none"/>
<path d="M381.5 373.3 L395.7 375.9 L387.8 384.5" stroke="#ed1c24" stroke-width="5" fill="none" stroke-linejoin="round" stroke-linecap="round"/>
</svg>
</body></html>
